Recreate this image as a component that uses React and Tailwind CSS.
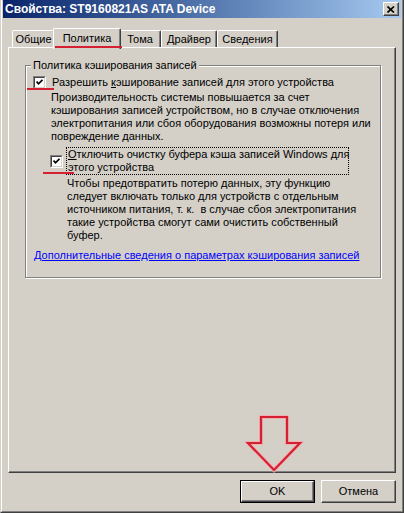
import React from 'react';

const font = { fontFamily: '"Liberation Sans", Arial, sans-serif' };

function CheckBox() {
  return (
    <div className="w-[13px] h-[13px] shrink-0 border-l border-t border-[#808080] border-r border-b border-r-white border-b-white">
      <div className="w-full h-full bg-white border-l border-t border-[#404040] border-r border-b border-r-[#d4d0c8] border-b-[#d4d0c8] flex items-center justify-center">
        <svg width="7" height="7" viewBox="0 0 7 7">
          <path d="M0.5 2.5 L2.5 4.8 L6.5 0.8" stroke="#000" strokeWidth="1.8" fill="none" />
        </svg>
      </div>
    </div>
  );
}

function Tab({ label, width, active }) {
  if (active) {
    return (
      <div
        className="relative z-10 -mx-[2px] -mb-[2px] h-[21px] bg-[#d4d0c8] border-l border-t border-white border-r border-r-[#404040] rounded-t-[2px] shadow-[inset_-1px_0_0_#808080] flex items-start justify-center pt-[3px] text-[11px] leading-[13px] text-black"
        style={{ width: width + 4 }}
      >
        {label}
      </div>
    );
  }
  return (
    <div
      className="h-[17px] bg-[#d4d0c8] border-l border-t border-white border-r border-r-[#404040] rounded-t-[2px] shadow-[inset_-1px_0_0_#808080] flex items-start justify-center pt-[2px] text-[11px] leading-[13px] text-black"
      style={{ width }}
    >
      {label}
    </div>
  );
}

function Button({ children, isDefault }) {
  return (
    <div className={`w-[75px] h-[23px] ${isDefault ? 'border border-black' : ''}`}>
      <div className="w-full h-full bg-[#d4d0c8] border-l border-t border-white border-r border-b border-r-[#404040] border-b-[#404040] shadow-[inset_-1px_-1px_0_#808080] flex items-center justify-center text-[11px] font-normal text-black">
        {children}
      </div>
    </div>
  );
}

export default function App() {
  const tabs = [
    { label: 'Общие', width: 43 },
    { label: 'Политика', width: 64, active: true },
    { label: 'Тома', width: 42 },
    { label: 'Драйвер', width: 56 },
    { label: 'Сведения', width: 61 },
  ];

  return (
    <div className="relative w-[404px] h-[513px] bg-[#d4d0c8] border-l border-l-[#d4d0c8] border-r border-b border-r-[#404040] border-b-[#404040] overflow-hidden" style={font}>
      <div className="h-full flex flex-col border-l border-l-white border-r border-b border-r-[#808080] border-b-[#808080] px-[1px]">
        {/* Title bar */}
        <div className="h-[18px] shrink-0 bg-gradient-to-r from-[#0a246a] to-[#a6caf0] flex items-center justify-between pl-[2px] pr-[2px]">
          <span className="text-white font-bold text-[12px] leading-[14px]">Свойства: ST9160821AS ATA Device</span>
          <div className="w-[16px] h-[14px] bg-[#d4d0c8] border-l border-t border-white border-r border-b border-r-[#404040] border-b-[#404040] shadow-[inset_-1px_-1px_0_#808080] flex items-center justify-center">
            <svg width="8" height="7" viewBox="0 0 8 7">
              <path d="M0.5 0.5 L7 6.5 M7 0.5 L0.5 6.5" stroke="#000" strokeWidth="1.7" />
            </svg>
          </div>
        </div>

        {/* Tabs */}
        <div className="mt-[10px] h-[19px] flex items-end pl-[9px]">
          {tabs.map(t => (
            <Tab key={t.label} {...t} />
          ))}
        </div>

        {/* Tab panel */}
        <div className="mx-[5px] h-[426px] border-l border-t border-white border-r border-b border-r-[#404040] border-b-[#404040] shadow-[inset_-1px_-1px_0_#808080] pl-[16px] pt-[17px]">
          <div className="relative w-[356px] h-[213px] border border-[#808080] shadow-[inset_1px_1px_0_white,1px_1px_0_white] pl-[7px] pt-[10px] text-[11px] leading-[13px] text-black">
            <span className="absolute left-[5px] -top-[7px] px-[2px] bg-[#d4d0c8]">Политика кэширования записей</span>

            <div className="flex items-center gap-[6px]">
              <CheckBox />
              <span>Разрешить <span className="underline">к</span>эширование записей для этого устройства</span>
            </div>
            <div className="ml-[18px] mt-[2px] whitespace-nowrap">
              Производительность системы повышается за счет<br />
              кэширования записей устройством, но в случае отключения<br />
              электропитания или сбоя оборудования возможны потеря или<br />
              повреждение данных.
            </div>

            <div className="mt-[4px] ml-[17px] flex items-center gap-[3px]">
              <CheckBox />
              <div className="border border-dotted border-black px-[1px] py-[0px] w-[283px] whitespace-nowrap">
                <span className="underline">О</span>тключить очистку буфера кэша записей Windows для<br />
                этого устройства
              </div>
            </div>
            <div className="ml-[34px] mt-[2px] whitespace-nowrap">
              Чтобы предотвратить потерю данных, эту функцию<br />
              следует включать только для устройств с отдельным<br />
              источником питания, т. к.&nbsp; в случае сбоя электропитания<br />
              такие устройства смогут сами очистить собственный<br />
              буфер.
            </div>

            <div className="mt-[7px] ml-[1px] text-[#0000ff] underline whitespace-nowrap">
              Дополнительные сведения о параметрах кэширования записей
            </div>
          </div>
        </div>

        {/* Buttons */}
        <div className="mt-[7px] flex justify-end gap-[6px] mr-[5px]">
          <Button isDefault>OK</Button>
          <Button>Отмена</Button>
        </div>
      </div>

      {/* Red annotations */}
      <div className="absolute left-[54px] top-[46px] w-[67px] h-[2px] bg-[#d42030] z-20" />
      <div className="absolute left-[26px] top-[88px] w-[27px] h-[2px] bg-[#d42030]" />
      <div className="absolute left-[42px] top-[172px] w-[31px] h-[2px] bg-[#d42030]" />
      <svg className="absolute left-[244px] top-[415px]" width="60" height="60" viewBox="244 415 60 60">
        <path d="M260 417 L286 417 L286 443 L299 443 L273 470 L247 443 L260 443 Z" fill="none" stroke="#f0b0b4" strokeWidth="4" strokeLinejoin="miter" />
        <path d="M260 417 L286 417 L286 443 L299 443 L273 470 L247 443 L260 443 Z" fill="none" stroke="#d42030" strokeWidth="2.2" strokeLinejoin="miter" />
      </svg>
    </div>
  );
}
